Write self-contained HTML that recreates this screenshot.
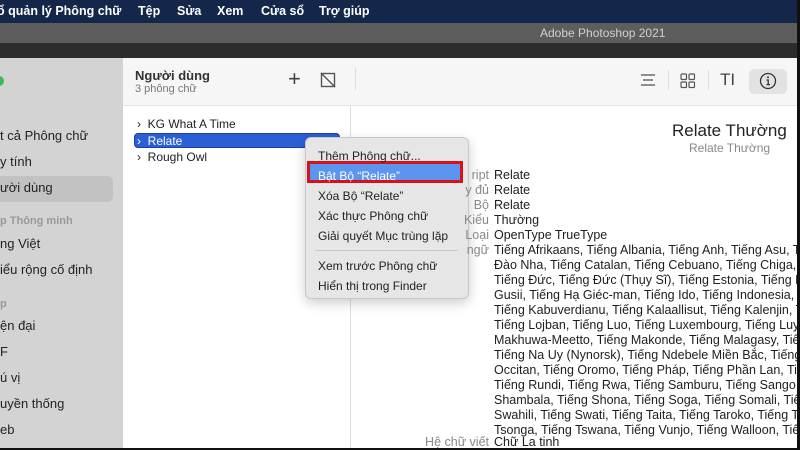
<!DOCTYPE html>
<html><head><meta charset="utf-8"><style>
*{margin:0;padding:0;box-sizing:border-box}
body{width:800px;height:450px;overflow:hidden;position:relative;background:#fff;font-family:"Liberation Sans",sans-serif;color:#1d1d1d}
.a{position:absolute;white-space:nowrap}
#menu{left:0;top:0;width:800px;height:23px;background:#14264a;color:#fff;font-size:12.5px;font-weight:bold}
#menu span{position:absolute;top:4px}
#title{left:0;top:23px;width:800px;height:20px;background:#5d5d5d;color:#d0d0d0;font-size:12px;text-align:center}
#strip{left:0;top:43px;width:800px;height:15px;background:#2c2c2c}
#side{left:0;top:58px;width:123px;height:392px;background:#d3d3d3;font-size:13px;color:#222}
#side .a{left:0}
#mid{left:123px;top:58px;width:227px;height:392px;background:#fff}
#hdr{left:123px;top:58px;width:677px;height:48px;background:#f6f6f6;border-bottom:1px solid #e2e2e2}
.r{font-size:12.5px;line-height:15px}
.lab{right:311px;color:#888;text-align:right}
.val{left:494px}
</style></head><body>
<div class="a" id="menu"><span style="left:-3px">ổ quản lý Phông chữ</span><span style="left:138px">Tệp</span><span style="left:177px">Sửa</span><span style="left:217px">Xem</span><span style="left:261px">Cửa sổ</span><span style="left:319px">Trợ giúp</span></div>
<div class="a" id="title"><span style="position:absolute;left:540px;top:3px">Adobe Photoshop 2021</span></div>
<div class="a" id="strip"></div>
<div class="a" id="side">
<div class="a" style="left:-6px;top:18px;width:10px;height:10px;border-radius:5px;background:#3dbb4b"></div>
<div class="a" style="top:70px">t cả Phông chữ</div>
<div class="a" style="top:96px">y tính</div>
<div class="a" style="top:118px;width:113px;height:26px;background:#c2c2c2;border-radius:0 6px 6px 0"></div>
<div class="a" style="top:122px">ười dùng</div>
<div class="a" style="top:157px;font-size:11px;color:#999;font-weight:bold">p Thông minh</div>
<div class="a" style="top:178px">ng Việt</div>
<div class="a" style="top:204px">iểu rộng cố định</div>
<div class="a" style="top:240px;font-size:11px;color:#999;font-weight:bold">p</div>
<div class="a" style="top:260px">ện đại</div>
<div class="a" style="top:286px">F</div>
<div class="a" style="top:312px">ú vị</div>
<div class="a" style="top:338px">uyền thống</div>
<div class="a" style="top:364px">eb</div>
</div>
<div class="a" id="mid"></div>
<div class="a" id="hdr"></div>
<div class="a" style="left:135px;top:68px;font-size:13px;font-weight:bold;color:#333">Người dùng</div>
<div class="a" style="left:135px;top:83px;font-size:11px;color:#777">3 phông chữ</div>
<div class="a" style="left:288px;top:68px;font-size:22px;color:#444;line-height:22px">+</div>
<svg class="a" style="left:320px;top:72px" width="16" height="16"><rect x="1.5" y="1.5" width="13" height="13" fill="none" stroke="#555" stroke-width="1.4"/><line x1="1" y1="1" x2="15" y2="15" stroke="#555" stroke-width="1.4"/></svg>
<div class="a" style="left:355px;top:68px;width:1px;height:22px;background:#ddd"></div>
<svg class="a" style="left:640px;top:73px" width="16" height="14"><g stroke="#555" stroke-width="1.3"><line x1="1" y1="2" x2="15" y2="2"/><line x1="3" y1="7" x2="13" y2="7"/><line x1="1" y1="12" x2="15" y2="12"/></g></svg>
<div class="a" style="left:668px;top:70px;width:1px;height:20px;background:#ddd"></div>
<svg class="a" style="left:680px;top:73px" width="16" height="16"><g fill="none" stroke="#555" stroke-width="1.2"><rect x="1" y="1" width="5.5" height="5.5" rx="1"/><rect x="9" y="1" width="5.5" height="5.5" rx="1"/><rect x="1" y="9" width="5.5" height="5.5" rx="1"/><rect x="9" y="9" width="5.5" height="5.5" rx="1"/></g></svg>
<div class="a" style="left:708px;top:70px;width:1px;height:20px;background:#ddd"></div>
<div class="a" style="left:720px;top:70px;font-size:17px;color:#444">T<span style="font-weight:100">I</span></div>
<div class="a" style="left:749px;top:69px;width:38px;height:25px;background:#e2e2e2;border-radius:5px"></div>
<svg class="a" style="left:759px;top:72px" width="18" height="18"><circle cx="9" cy="9" r="7.5" fill="none" stroke="#333" stroke-width="1.3"/><circle cx="9" cy="5.3" r="1" fill="#333"/><path d="M7.5 8h1.7v4.5M7.5 12.6h3.5" fill="none" stroke="#333" stroke-width="1.3"/></svg>
<div class="a" style="left:350px;top:106px;width:1px;height:344px;background:#ddd"></div>
<div class="a" style="left:137px;top:117px;font-size:12px;color:#222">›&nbsp; KG What A Time</div>
<div class="a" style="left:134px;top:133px;width:206px;height:15px;background:#2b5fd6;border:1.5px solid #1c3f9e;border-radius:4px"></div>
<div class="a" style="left:137px;top:134px;font-size:12px;color:#fff">›&nbsp; Relate</div>
<div class="a" style="left:137px;top:150px;font-size:12px;color:#222">›&nbsp; Rough Owl</div>
<div class="a" style="left:305px;top:137px;width:164px;height:162px;background:#e6e6e6;border:1px solid #c8c8c8;border-radius:6px;box-shadow:0 4px 12px rgba(0,0,0,.2)"></div>
<div class="a" style="left:307px;top:161px;width:156px;height:22px;background:#5b95f0;border:3px solid #d8101c"></div>
<div class="a" style="left:318px;top:146px;font-size:12px;line-height:20px;color:#222">Thêm Phông chữ...<br><span style="color:#fff">Bật Bộ “Relate”</span><br>Xóa Bộ “Relate”<br>Xác thực Phông chữ<br>Giải quyết Mục trùng lặp</div>
<div class="a" style="left:315px;top:250px;width:143px;height:1px;background:#c8c8c8"></div>
<div class="a" style="left:318px;top:256px;font-size:12px;line-height:20px;color:#222">Xem trước Phông chữ<br>Hiển thị trong Finder</div>
<div class="a" style="left:672px;top:121px;font-size:17px;color:#222">Relate Thường</div>
<div class="a" style="left:689px;top:141px;font-size:12px;color:#888">Relate Thường</div>
<div class="a r lab" style="top:168px">ript<br>y đủ<br>Bộ<br>Kiểu<br>Loại<br>ngữ</div>
<div class="a r val" style="top:168px">Relate<br>Relate<br>Relate<br>Thường<br>OpenType TrueType<br>Tiếng Afrikaans, Tiếng Albania, Tiếng Anh, Tiếng Asu, T<br>Đào Nha, Tiếng Catalan, Tiếng Cebuano, Tiếng Chiga, T<br>Tiếng Đức, Tiếng Đức (Thụy Sĩ), Tiếng Estonia, Tiếng F<br>Gusii, Tiếng Hạ Giéc-man, Tiếng Ido, Tiếng Indonesia, T<br>Tiếng Kabuverdianu, Tiếng Kalaallisut, Tiếng Kalenjin, T<br>Tiếng Lojban, Tiếng Luo, Tiếng Luxembourg, Tiếng Luy<br>Makhuwa-Meetto, Tiếng Makonde, Tiếng Malagasy, Tiế<br>Tiếng Na Uy (Nynorsk), Tiếng Ndebele Miền Bắc, Tiếng<br>Occitan, Tiếng Oromo, Tiếng Pháp, Tiếng Phần Lan, Ti<br>Tiếng Rundi, Tiếng Rwa, Tiếng Samburu, Tiếng Sango,<br>Shambala, Tiếng Shona, Tiếng Soga, Tiếng Somali, Tiế<br>Swahili, Tiếng Swati, Tiếng Taita, Tiếng Taroko, Tiếng T<br>Tsonga, Tiếng Tswana, Tiếng Vunjo, Tiếng Walloon, Tiế</div>
<div class="a r lab" style="top:435px">Hệ chữ viết</div>
<div class="a r val" style="top:435px">Chữ La tinh</div>
<div class="a" style="left:797px;top:0;width:3px;height:450px;background:#111"></div>
<div class="a" style="left:0;top:448px;width:800px;height:2px;background:#111"></div>
</body></html>
